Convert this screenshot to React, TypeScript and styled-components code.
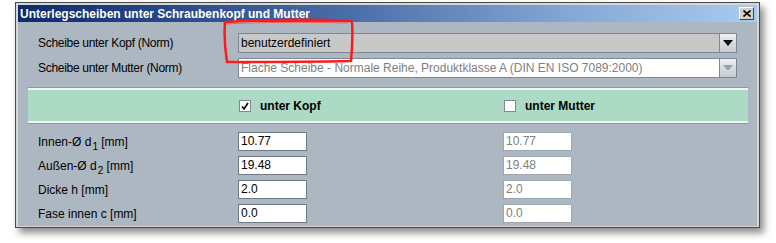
import { ReactElement } from "react";
import styled, { createGlobalStyle } from "styled-components";

const GlobalStyle = createGlobalStyle`
  body {
    margin: 0;
    background: #ffffff;
    font-family: "Liberation Sans", Arial, sans-serif;
  }
`;

const Page = styled.div`
  position: relative;
  width: 776px;
  height: 243px;
  overflow: hidden;
`;

const Frame = styled.div`
  margin: 2px 0 0 15px;
  width: 745px;
  height: 226px;
  box-sizing: border-box;
  border: 1px solid #4a4a4a;
  padding: 2px 2px 1px 2px;
  background: #d6d6d6;
  box-shadow: 4px 5px 7px rgba(0, 0, 0, 0.45);
  display: flex;
  flex-direction: column;
`;

const TitleBar = styled.div`
  height: 17px;
  flex: none;
  display: flex;
  align-items: center;
  justify-content: space-between;
  padding: 0 2px 0 2px;
  background: linear-gradient(to right, #0c2a6e 0%, #4a6ea8 45%, #86a8d6 75%, #a8cbf0 100%);
`;

const Title = styled.span`
  color: #ffffff;
  font-weight: bold;
  font-size: 12px;
`;

const CloseButton = styled.div`
  width: 15px;
  height: 13px;
  box-sizing: border-box;
  border: 1px solid;
  border-color: #ffffff #404040 #404040 #ffffff;
  background: #d4d0c8;
  display: flex;
  align-items: center;
  justify-content: center;
  margin-right: 1px;
`;

const Body = styled.div`
  flex: 1;
  background: #adb7c1;
  padding: 11px 9px 0 10px;
  display: flex;
  flex-direction: column;
`;

const Section = styled.div`
  padding: 0 11px 0 10px;
  display: flex;
  flex-direction: column;
  gap: 5px;
`;

const ComboRow = styled.div`
  display: grid;
  grid-template-columns: 200px 1fr;
  align-items: center;
`;

const Label = styled.span<{ $tight?: boolean }>`
  font-size: 12px;
  color: #000000;
  white-space: nowrap;
  letter-spacing: ${({ $tight }) => ($tight ? "-0.3px" : "0")};
  sub {
    font-size: 10px;
    vertical-align: -4px;
    line-height: 0;
    margin-left: 1px;
  }
`;

const Combo = styled.div<{ $enabled: boolean }>`
  height: 20px;
  box-sizing: border-box;
  display: flex;
  border: 1px solid #7d8894;
  background: ${({ $enabled }) => ($enabled ? "#c8c8c8" : "#ffffff")};
`;

const ComboText = styled.span<{ $enabled: boolean }>`
  flex: 1;
  font-size: 12px;
  line-height: 18px;
  padding-left: 2px;
  color: ${({ $enabled }) => ($enabled ? "#000000" : "#808080")};
  white-space: nowrap;
  overflow: hidden;
`;

const ArrowButton = styled.div`
  width: 17px;
  flex: none;
  box-sizing: border-box;
  border-left: 1px solid #7d8894;
  background: linear-gradient(to bottom, #eef0f2, #c4cad0);
  display: flex;
  align-items: center;
  justify-content: center;
`;

const Arrow = styled.div<{ $enabled: boolean }>`
  width: 0;
  height: 0;
  border-left: 5px solid transparent;
  border-right: 5px solid transparent;
  border-top: 6px solid ${({ $enabled }) => ($enabled ? "#000000" : "#9aa2aa")};
`;

const Band = styled.div`
  margin-top: 10px;
  height: 31px;
  background: #acdac5;
  border-top: 2px solid #f2f5f7;
  border-bottom: 2px solid #f2f5f7;
  box-shadow: 0 -1px 0 #8e99a4, 0 1px 0 #8e99a4;
  display: grid;
  grid-template-columns: 200px 265px 1fr;
  align-items: center;
  padding-left: 10px;
`;

const CheckItem = styled.label`
  display: flex;
  align-items: center;
  gap: 9px;
  font-size: 12px;
  font-weight: bold;
  color: #000000;
`;

const CheckBox = styled.span`
  width: 12px;
  height: 12px;
  box-sizing: border-box;
  border: 1px solid #7d8894;
  background: #ffffff;
  display: flex;
  align-items: center;
  justify-content: center;
  margin-left: 1px;
`;

const Fields = styled.div`
  margin-top: 9px;
  padding-left: 10px;
  display: grid;
  grid-template-columns: 200px 265px 1fr;
  row-gap: 5px;
  align-items: center;
`;

const Field = styled.div<{ $enabled: boolean }>`
  width: 69px;
  height: 19px;
  box-sizing: border-box;
  border: 1px solid ${({ $enabled }) => ($enabled ? "#6f7a86" : "#9ea8b2")};
  background: #ffffff;
  font-size: 12px;
  line-height: 17px;
  padding-left: 2px;
  color: ${({ $enabled }) => ($enabled ? "#000000" : "#808080")};
`;

const Annotation = styled.svg`
  position: absolute;
  left: 220px;
  top: 17px;
  pointer-events: none;
`;

const rows: { label: ReactElement; value: string }[] = [
  { label: <>Innen-Ø d<sub>1</sub> [mm]</>, value: "10.77" },
  { label: <>Außen-Ø d<sub>2</sub> [mm]</>, value: "19.48" },
  { label: <>Dicke h [mm]</>, value: "2.0" },
  { label: <>Fase innen c [mm]</>, value: "0.0" },
];

const App = (): ReactElement => {
  return (
    <Page>
      <GlobalStyle />
      <Frame>
        <TitleBar>
          <Title>Unterlegscheiben unter Schraubenkopf und Mutter</Title>
          <CloseButton>
            <svg width="8" height="7" viewBox="0 0 8 7">
              <path d="M0.5 0.5 L7.5 6.5 M7.5 0.5 L0.5 6.5" stroke="#000" strokeWidth="1.6" />
            </svg>
          </CloseButton>
        </TitleBar>
        <Body>
          <Section>
            <ComboRow>
              <Label $tight>Scheibe unter Kopf (Norm)</Label>
              <Combo $enabled>
                <ComboText $enabled>benutzerdefiniert</ComboText>
                <ArrowButton>
                  <Arrow $enabled />
                </ArrowButton>
              </Combo>
            </ComboRow>
            <ComboRow>
              <Label $tight>Scheibe unter Mutter (Norm)</Label>
              <Combo $enabled={false}>
                <ComboText $enabled={false}>
                  Flache Scheibe - Normale Reihe, Produktklasse A (DIN EN ISO 7089:2000)
                </ComboText>
                <ArrowButton>
                  <Arrow $enabled={false} />
                </ArrowButton>
              </Combo>
            </ComboRow>
          </Section>
          <Band>
            <span />
            <CheckItem>
              <CheckBox>
                <svg width="8" height="8" viewBox="0 0 8 8">
                  <path d="M1 4.5 L3 7 L7 1" stroke="#000" strokeWidth="1.6" fill="none" />
                </svg>
              </CheckBox>
              unter Kopf
            </CheckItem>
            <CheckItem>
              <CheckBox />
              unter Mutter
            </CheckItem>
          </Band>
          <Fields>
            {rows.map((row, i) => (
              <Row key={i} label={row.label} value={row.value} />
            ))}
          </Fields>
        </Body>
      </Frame>
      <Annotation width="140" height="50" viewBox="0 0 140 50">
        <path
          d="M5 5 C40 3, 90 2, 130 4 L132 5 C133 18, 132 32, 131 44 C95 45, 45 45, 7 45 C5 32, 4 18, 5 5 Z"
          stroke="#ff1a1a"
          strokeWidth="2.5"
          fill="none"
          strokeLinejoin="round"
        />
        <path d="M6 7 C40 5, 90 5, 128 6" stroke="#ff4040" strokeWidth="1" fill="none" opacity="0.7" />
      </Annotation>
    </Page>
  );
};

const Row = ({ label, value }: { label: ReactElement; value: string }): ReactElement => (
  <>
    <Label>{label}</Label>
    <Field $enabled>{value}</Field>
    <Field $enabled={false}>{value}</Field>
  </>
);

export default App;
